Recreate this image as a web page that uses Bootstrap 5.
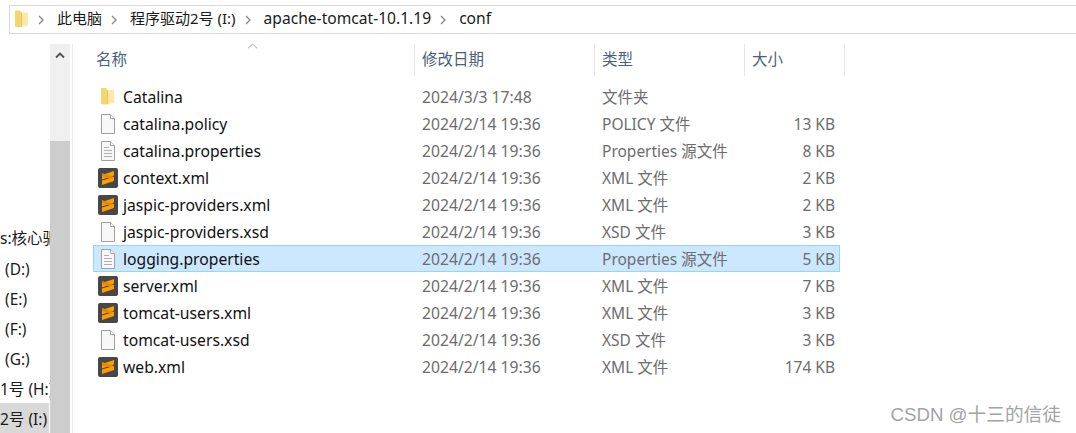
<!DOCTYPE html>
<html lang="zh-CN">
<head>
  <meta charset="UTF-8">
  <meta name="viewport" content="width=device-width, initial-scale=1">
  <title>conf</title>
  <link href="https://cdn.jsdelivr.net/npm/bootstrap@5.3.0/dist/css/bootstrap.min.css" rel="stylesheet">
  <style>
    html, body { height: 433px; overflow: hidden; }
    body { font-family: "Noto Sans", "Noto Sans CJK SC", sans-serif; font-size: 15.5px; color: #1a1a1a; background: #fff; }
    .shell { width: 1076px; height: 433px; position: relative; padding-top: 5px; }
    .addr-bar { height: 29px; margin-left: 9px; border: 1px solid #d9d9d9; border-right: 0; padding-left: 5px; }
    .addr-bar .chev { width: 8px; height: 10px; flex: none; margin: 0 12px 0 8px; }
    .addr-bar .chev:first-of-type { margin-right: 11px; }
    .addr-bar .crumb { line-height: 24px; margin-top: -3px; white-space: nowrap; font-size: 15px; }
    .addr-bar .crumb.latin { font-size: 15.6px; }
    .addr-folder { width: 13px; height: 18px; flex: none; margin-right: 1px; margin-top: -2px; }
    .body-row { height: 399px; }
    .side-pane { width: 50px; flex: none; padding-top: 189px; overflow: hidden; }
    .side-item { height: 30px; line-height: 32px; white-space: nowrap; overflow: hidden; padding-left: 5px; }
    .side-item:first-child { line-height: 30px; }
    .side-item.cut { padding-left: 0; }
    .side-item.now { background: #d9d9d9; width: 49px; }
    .scroll-col { width: 20px; flex: none; margin-top: 10px; background: #f0f0f0; }
    .scroll-btn { height: 97px; padding-top: 8px; }
    .scroll-thumb { background: #cdcdcd; height: 293px; }
    .pane-rule { width: 1px; flex: none; margin: 10px 0 0 2px; background: #ececec; }
    .files { width: 772px; flex: none; padding: 10px 0 0 20px; position: relative; }
    .head-row { height: 32px; color: #4c607a; }
    .col-name { width: 322px; flex: none; }
    .col-date { width: 180px; flex: none; }
    .col-type { width: 150px; flex: none; }
    .col-size { width: 100px; flex: none; }
    .head-row > div { border-right: 1px solid #e5e5e5; padding-left: 3px; line-height: 30px; }
    .head-row .col-date, .head-row .col-type, .head-row .col-size { padding-left: 7px; }
    .sort-mark { position: absolute; left: 174px; top: 9px; width: 11px; height: 6px; }
    .file-list { margin-top: 7px; }
    .file-row { height: 27px; line-height: 26px; border: 1px solid transparent; width: 747px; }
    .file-row.picked { background: #cce8ff; border-color: #99d1ff; }
    .file-row .col-name { width: 322px; padding-left: 4px; gap: 5px; color: #111; font-size: 15.7px; }
    .file-row .col-date { font-size: 15.7px; }
    .file-row .col-date, .file-row .col-type { color: #6d6d6d; padding-left: 6px; }
    .file-row .col-size { width: 89px; color: #6d6d6d; text-align: right; }
    .f-icon { width: 20px; height: 20px; flex: none; margin-top: 3px; }
    .mark-csdn { position: absolute; right: 15px; bottom: 6px; font-family: "Liberation Sans", "Noto Sans CJK SC", sans-serif; font-size: 18.7px; line-height: 24px; color: #a3a3a3; }
  </style>
</head>
<body>
<svg width="0" height="0" class="position-absolute">
  <defs>
    <symbol id="ic-folder" viewBox="0 0 20 20">
      <path d="M3 1h5l1 2v14.500H4l-1-1z" fill="#f5d56f"/>
      <path d="M9 3h7v13l-7 1.500z" fill="#fbe9a8"/>
      <path d="M9 3h1v14H9z" fill="#eec45a"/>
    </symbol>
    <symbol id="ic-blank" viewBox="0 0 20 20">
      <path d="M3.500 .5h9l4 4v15h-13z" fill="#f8f8f8" stroke="#a0a0a0"/>
      <path d="M12.500 .5v4h4" fill="#fff" stroke="#a0a0a0"/>
    </symbol>
    <symbol id="ic-text" viewBox="0 0 20 20">
      <path d="M3.500 .5h9l4 4v15h-13z" fill="#f8f8f8" stroke="#a0a0a0"/>
      <path d="M12.500 .5v4h4" fill="#fff" stroke="#a0a0a0"/>
      <path d="M6 6.500h5M6 9.500h8M6 12.500h8M6 15.500h8" stroke="#b0b0b0" fill="none"/>
    </symbol>
    <symbol id="ic-sublime" viewBox="0 0 20 20">
      <rect x="0" y="0" width="20" height="20" rx="2" fill="#474747"/>
      <path d="M16 3v4.500L4 11.500V7z" fill="#ff9c00"/>
      <path d="M4 8l12 4v-3L4 5z" fill="#e58a00"/>
      <path d="M16 9v4L4 17v-4.500z" fill="#ff9c00"/>
    </symbol>
  </defs>
</svg>

<div class="shell">
  <div class="addr-bar d-flex align-items-center">
    <svg class="addr-folder" viewBox="3 1 13 17"><use href="#ic-folder" width="20" height="20"/></svg>
    <svg class="chev" viewBox="0 0 8 10"><path d="M2 1l4 4-4 4" fill="none" stroke="#8a8a8a" stroke-width="1.400"/></svg>
    <span class="crumb">此电脑</span>
    <svg class="chev" viewBox="0 0 8 10"><path d="M2 1l4 4-4 4" fill="none" stroke="#8a8a8a" stroke-width="1.400"/></svg>
    <span class="crumb">程序驱动2号 (I:)</span>
    <svg class="chev" viewBox="0 0 8 10"><path d="M2 1l4 4-4 4" fill="none" stroke="#8a8a8a" stroke-width="1.400"/></svg>
    <span class="crumb latin">apache-tomcat-10.1.19</span>
    <svg class="chev" viewBox="0 0 8 10"><path d="M2 1l4 4-4 4" fill="none" stroke="#8a8a8a" stroke-width="1.400"/></svg>
    <span class="crumb latin">conf</span>
  </div>

  <div class="body-row d-flex">
    <div class="side-pane">
      <div class="side-item cut">s:核心驱动</div>
      <div class="side-item">(D:)</div>
      <div class="side-item">(E:)</div>
      <div class="side-item">(F:)</div>
      <div class="side-item">(G:)</div>
      <div class="side-item cut">1号 (H:)</div>
      <div class="side-item cut now">2号 (I:)</div>
    </div>
    <div class="scroll-col">
      <div class="scroll-btn d-flex justify-content-center">
        <svg width="10" height="7" viewBox="0 0 10 7"><path d="M1 5.500l4-4 4 4" fill="none" stroke="#505050" stroke-width="1.800"/></svg>
      </div>
      <div class="scroll-thumb"></div>
    </div>
    <div class="pane-rule"></div>
    <div class="files">
      <svg class="sort-mark" viewBox="0 0 12 6"><path d="M1 5.500l5-4.500 5 4.500" fill="none" stroke="#a0a0a0"/></svg>
      <div class="head-row d-flex">
        <div class="col-name">名称</div>
        <div class="col-date">修改日期</div>
        <div class="col-type">类型</div>
        <div class="col-size">大小</div>
      </div>
      <div class="file-list" id="file-list"></div>
    </div>
  </div>

  <div class="mark-csdn">CSDN @十三的信徒</div>
</div>

<script>
  const files = [
    ['Catalina', 'folder', '2024/3/3 17:48', '文件夹', ''],
    ['catalina.policy', 'blank', '2024/2/14 19:36', 'POLICY 文件', '13 KB'],
    ['catalina.properties', 'text', '2024/2/14 19:36', 'Properties 源文件', '8 KB'],
    ['context.xml', 'sublime', '2024/2/14 19:36', 'XML 文件', '2 KB'],
    ['jaspic-providers.xml', 'sublime', '2024/2/14 19:36', 'XML 文件', '2 KB'],
    ['jaspic-providers.xsd', 'blank', '2024/2/14 19:36', 'XSD 文件', '3 KB'],
    ['logging.properties', 'text', '2024/2/14 19:36', 'Properties 源文件', '5 KB'],
    ['server.xml', 'sublime', '2024/2/14 19:36', 'XML 文件', '7 KB'],
    ['tomcat-users.xml', 'sublime', '2024/2/14 19:36', 'XML 文件', '3 KB'],
    ['tomcat-users.xsd', 'blank', '2024/2/14 19:36', 'XSD 文件', '3 KB'],
    ['web.xml', 'sublime', '2024/2/14 19:36', 'XML 文件', '174 KB']
  ];
  document.getElementById('file-list').innerHTML = files.map(f => `
    <div class="file-row d-flex${f[0] === 'logging.properties' ? ' picked' : ''}">
      <div class="col-name d-flex align-items-start"><svg class="f-icon"><use href="#ic-${f[1]}"/></svg><span>${f[0]}</span></div>
      <div class="col-date">${f[2]}</div>
      <div class="col-type">${f[3]}</div>
      <div class="col-size">${f[4]}</div>
    </div>`).join('');
</script>
<script src="https://cdn.jsdelivr.net/npm/bootstrap@5.3.0/dist/js/bootstrap.bundle.min.js"></script>
</body>
</html>
